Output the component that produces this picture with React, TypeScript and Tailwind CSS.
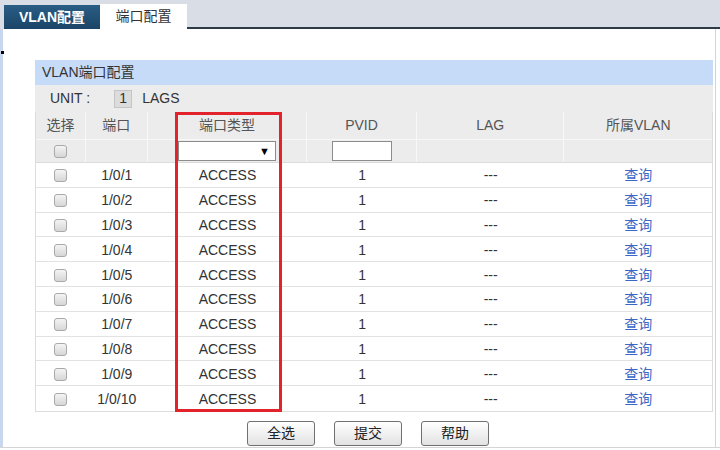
import React from 'react'

const ports = Array.from({ length: 10 }, (_, i) => `1/0/${i + 1}`)

const Checkbox = () => (
  <span className="inline-block w-[13px] h-[13px] rounded-[3px] border border-[#a9a9a9] bg-gradient-to-b from-[#f4f4f4] to-[#d6d6d6]" />
)

const Btn = ({ label }: { label: string }) => (
  <button className="w-[68px] h-[25px] rounded-[3px] border border-[#707070] bg-gradient-to-b from-[#ffffff] to-[#e2e2e2] text-[14px] text-[#222]">
    {label}
  </button>
)

const cols = ['w-[50px]', 'w-[62px]', 'w-[160px]', 'w-[110px]', 'w-[148px]', 'w-[148px]']

const App: React.FC = () => {
  return (
    <div className="relative w-[720px] h-[450px] bg-white overflow-hidden font-['Liberation_Sans','Noto_Sans_CJK_SC',sans-serif] text-[#333]">
      {/* Tabs */}
      <div className="flex items-end h-[29px] bg-[#d9dee6] pl-[4px]">
        <div className="w-[96px] h-[24px] flex items-center justify-center bg-gradient-to-b from-[#2a5d85] to-[#1b4568] text-white text-[14px] font-bold">
          VLAN配置
        </div>
        <div className="w-[87px] h-[25px] flex items-center justify-center bg-white text-[14px] text-[#333]">
          端口配置
        </div>
        <div className="flex-1 h-[2px] bg-[#2d3b49]" />
      </div>

      {/* Content frame */}
      <div className="flex h-[419px] border-b border-[#d4d4d4]">
        <div className="w-[3px] bg-[#c9d7ee]" />
        <div className="relative w-[713px] border-r border-[#d4d4d4] pl-[32px] pt-[31px]">
          <div className="w-[678px]">
            <div className="h-[25px] bg-[#c6dbf8] flex items-center pl-[7px] text-[14px] text-[#333]">
              VLAN端口配置
            </div>
            <div className="h-[27px] bg-[#ececec] flex items-center pl-[15px] text-[14px] text-[#333]">
              <span>UNIT :</span>
              <span className="ml-[24px] w-[18px] h-[18px] flex items-center justify-center bg-[#dcdcdc] border border-[#c4c4c4] text-[14px]">
                1
              </span>
              <span className="ml-[10px]">LAGS</span>
            </div>

            {/* Table */}
            <div className="border-x border-b border-[#dcdcdc]">
              <div className="flex h-[28px] bg-[#ececec] text-[14px] text-[#555] border-b border-[#f8f8f8]">
                {['选择', '端口', '端口类型', 'PVID', 'LAG', '所属VLAN'].map((h, i) => (
                  <div
                    key={h}
                    className={`${cols[i]} flex items-center justify-center ${i < 5 ? 'border-r border-[#f8f8f8]' : ''}`}
                  >
                    {h}
                  </div>
                ))}
              </div>
              <div className="flex h-[23px] bg-[#ececec] border-b border-[#dcdcdc]">
                <div className={`${cols[0]} flex items-center justify-center border-r border-[#f8f8f8]`}>
                  <Checkbox />
                </div>
                <div className={`${cols[1]} border-r border-[#f8f8f8]`} />
                <div className={`${cols[2]} flex items-center justify-center border-r border-[#f8f8f8]`}>
                  <div className="w-[98px] h-[20px] bg-white border border-[#8c8c8c] flex items-center justify-end pr-[5px] text-[11px] text-black">
                    ▼
                  </div>
                </div>
                <div className={`${cols[3]} flex items-center justify-center border-r border-[#f8f8f8]`}>
                  <div className="w-[60px] h-[20px] bg-white border border-[#8c8c8c]" />
                </div>
                <div className={`${cols[4]} border-r border-[#f8f8f8]`} />
                <div className={cols[5]} />
              </div>
              {ports.map((p, r) => (
                <div
                  key={p}
                  className={`flex h-[24.8px] text-[14px] text-[#333] bg-white pt-[2px] ${r < 9 ? 'border-b border-[#e2e2e2]' : ''}`}
                >
                  <div className={`${cols[0]} flex items-center justify-center`}>
                    <Checkbox />
                  </div>
                  <div className={`${cols[1]} flex items-center justify-center`}>{p}</div>
                  <div className={`${cols[2]} flex items-center justify-center`}>ACCESS</div>
                  <div className={`${cols[3]} flex items-center justify-center`}>1</div>
                  <div className={`${cols[4]} flex items-center justify-center`}>---</div>
                  <div className={`${cols[5]} flex items-center justify-center text-[#3a66c4]`}>查询</div>
                </div>
              ))}
            </div>

            {/* Buttons */}
            <div className="flex gap-[19px] pl-[212px] pt-[9px]">
              <Btn label="全选" />
              <Btn label="提交" />
              <Btn label="帮助" />
            </div>
          </div>

          {/* Highlight box */}
          <div className="absolute left-[172px] top-[83px] w-[107px] h-[300px] border-[3px] border-[#e2232b]" />
        </div>
      </div>

      <div className="absolute left-[1px] top-[51px] w-[3px] h-[3px] bg-black" />
    </div>
  )
}

export default App
